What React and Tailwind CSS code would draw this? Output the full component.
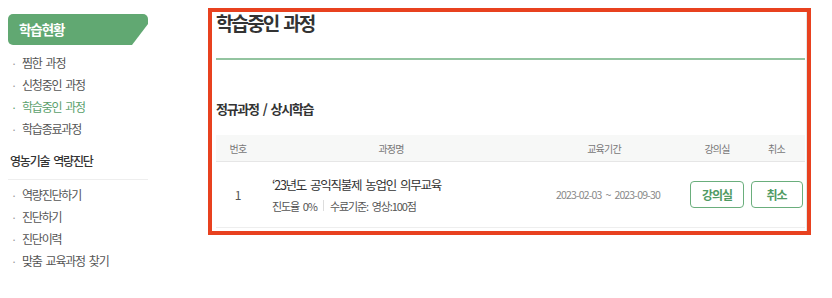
import React from "react";

const sideMenu1 = [
  { label: "찜한 과정" },
  { label: "신청중인 과정" },
  { label: "학습중인 과정", active: true },
  { label: "학습종료과정" },
];

const sideMenu2 = ["역량진단하기", "진단하기", "진단이력", "맞춤 교육과정 찾기"];

function MenuItem({ label, active }) {
  return (
    <li className="flex h-[22px] items-center">
      <span className={"w-[14px] pl-[3px] text-[11px] " + (active ? "text-[#5b9f6c]" : "text-[#999]")}>·</span>
      <span className={"text-[12px] tracking-[-0.1em] " + (active ? "text-[#5b9f6c]" : "text-[#555]")}>{label}</span>
    </li>
  );
}

export default function App() {
  return (
    <div className="flex h-[298px] w-[832px] items-start bg-white pl-[8px] pt-[8px] font-['Noto_Sans_CJK_KR',sans-serif] [word-spacing:0.15em]">
      {/* Sidebar */}
      <aside className="mt-[6px] w-[140px] shrink-0">
        <div className="h-[31px] rounded-[5px] bg-[#61a872] pl-[11px] text-[13.5px] font-bold leading-[31px] tracking-[-0.08em] text-white [clip-path:polygon(0_0,100%_0,100%_10px,calc(100%_-_16px)_100%,0_100%)]">
          학습현황
        </div>
        <ul className="mt-[7px]">
          {sideMenu1.map((m) => (
            <MenuItem key={m.label} label={m.label} active={m.active} />
          ))}
        </ul>
        <div className="mt-[10px] h-[22px] pl-[2px] text-[12px] font-medium leading-[22px] tracking-[-0.1em] text-[#333]">
          영농기술 역량진단
        </div>
        <div className="mt-[7px] h-px bg-[#eeeeee]" />
        <ul className="mt-[4px]">
          {sideMenu2.map((m) => (
            <MenuItem key={m} label={m} />
          ))}
        </ul>
      </aside>

      {/* Main content, highlighted */}
      <main className="ml-[60px] h-[227px] w-[603px] shrink-0 border-4 border-[#e8411f]">
        <div className="ml-[4px] h-full border-r border-[#e5e5e5] pr-[1px]">
          <h1 className="h-[22px] text-[19px] font-bold leading-[22px] tracking-[-0.1em] text-[#333]">학습중인 과정</h1>
          <div className="mt-[24px] h-[2px] bg-[#93c4a0]" />
          <h2 className="mt-[40px] h-[18px] text-[13px] font-bold leading-[18px] tracking-[-0.1em] text-[#333]">
            정규과정 / 상시학습
          </h2>

          {/* Table */}
          <div className="mt-[17px]">
            <div className="flex h-[27px] items-center border-b border-[#e6e6e6] bg-[#f7f8f7] text-[10px] tracking-[-0.08em] text-[#777]">
              <div className="w-[44px] text-center">번호</div>
              <div className="flex-1 text-center">과정명</div>
              <div className="w-[164px] text-center">교육기간</div>
              <div className="w-[62px] text-center">강의실</div>
              <div className="w-[57px] text-center">취소</div>
            </div>
            <div className="flex h-[66px] items-center border-b border-[#eeeeee]">
              <div className="w-[44px] text-center text-[12px] text-[#555]">1</div>
              <div className="flex-1 pl-[12px]">
                <div className="text-[12.5px] leading-[18px] tracking-[-0.1em] text-[#333]">
                  ‘23년도 공익직불제 농업인 의무교육
                </div>
                <div className="mt-[4px] flex items-center text-[11px] leading-[16px] tracking-[-0.1em] text-[#555]">
                  <span>진도율 0%</span>
                  <span className="mx-[6px] h-[11px] w-px bg-[#ddd]" />
                  <span>수료기준: 영상:100점</span>
                </div>
              </div>
              <div className="w-[164px] pl-[8px] text-center text-[10.5px] tracking-[-0.08em] text-[#888]">
                2023-02-03 ~ 2023-09-30
              </div>
              <div className="flex w-[62px] justify-center">
                <button className="h-[27px] w-[54px] rounded-[4px] border-[1.5px] border-[#6aae7c] text-[12px] font-bold tracking-[-0.08em] text-[#4f9a63]">
                  강의실
                </button>
              </div>
              <div className="flex w-[57px] justify-center">
                <button className="h-[27px] w-[52px] rounded-[4px] border-[1.5px] border-[#6aae7c] text-[12px] font-bold tracking-[-0.08em] text-[#4f9a63]">
                  취소
                </button>
              </div>
            </div>
          </div>
        </div>
      </main>
    </div>
  );
}
